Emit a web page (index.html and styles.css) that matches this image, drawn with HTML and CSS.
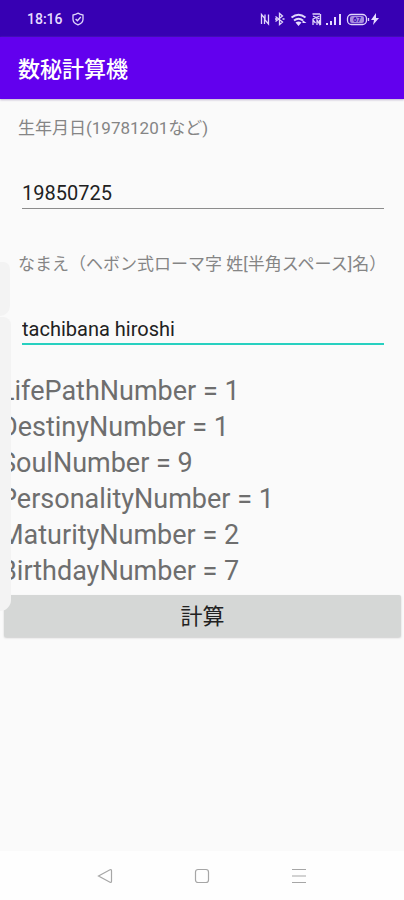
FILE: index.html
```html
<!DOCTYPE html>
<html lang="ja">
<head>
<meta charset="utf-8">
<meta name="viewport" content="width=device-width, initial-scale=1">
<title>数秘計算機</title>
<link rel="stylesheet" href="styles.css">
</head>
<body>
<div class="status">
  <span class="clock">18:16</span>
  <svg class="shield" width="14" height="14" viewBox="0 0 14 14"><path d="M7 1.200 9 2.200l3 .8v4.200c0 2.800-2.200 4.600-5 5.600-2.800-1-5-2.800-5-5.600V3l3-.8z"/><path d="m4.600 7 1.800 1.800L9.800 5"/></svg>
  <svg class="indicators" width="120" height="16" viewBox="0 0 120 16">
    <path d="M1.500 13V3.500L4.500 7v6M5 3.500V9l3.500 4V3.500"/>
    <path d="m15.500 5.500 7 5.500-3 2.500v-11l3 2.500-7 5.500M15 8h2M22.500 8h2"/>
    <path class="wide" d="M31.500 6.500q7-5.500 14 0M34 9.500q4.500-3.500 9 0"/>
    <path class="solid" d="m35.500 11.500q3-2 6 0l-3 3.500zM42.500 9l4 3h-4z"/>
    <path d="M52.500 3h7.500M53 5l6.500 3M59.500 5 53 8M53 14V9l2.500 3M57 14V9l2.500 4V9M60.500 3v11"/>
    <path class="solid" d="M66 12h2v2h-2zM70 10h2v4h-2zM74 6h2v8h-2zM79 3h2v11h-2z"/>
    <rect x="87.500" y="3.500" width="19" height="10" rx="4"/>
    <path d="M108.500 7v3"/>
    <rect class="charge" x="90" y="5" width="14" height="7" rx="2"/>
    <text x="97" y="11">67</text>
    <path class="solid" d="m116 2-5 7h3l-1 5 6-7h-3z"/>
  </svg>
</div>
<header class="appbar"><h1>数秘計算機</h1></header>
<main>
  <form class="form">
    <div class="field">
      <label for="birth">生年月日(19781201など)</label>
      <input id="birth" type="text" inputmode="numeric" value="19850725">
    </div>
    <div class="field">
      <label for="name">なまえ（ヘボン式ローマ字 姓[半角スペース]名）</label>
      <input id="name" class="active" type="text" value="tachibana hiroshi">
    </div>
    <output class="results" for="birth name">
      <span>LifePathNumber = 1</span>
      <span>DestinyNumber = 1</span>
      <span>SoulNumber = 9</span>
      <span>PersonalityNumber = 1</span>
      <span>MaturityNumber = 2</span>
      <span>BirthdayNumber = 7</span>
    </output>
    <button class="calc" type="button">計算</button>
  </form>
</main>
<div class="edge-tab"></div>
<div class="edge-panel"></div>
<nav class="navbar">
  <button type="button" aria-label="戻る"><svg width="16" height="16" viewBox="0 0 16 16"><path d="M1.500 8 13 1.800q1.500-.5 1.500 1v10.400q0 1.500-1.500 1z"/></svg></button>
  <button type="button" aria-label="ホーム"><svg width="16" height="16" viewBox="0 0 16 16"><rect x="1.500" y="1.500" width="13" height="13" rx="2.500"/></svg></button>
  <button type="button" aria-label="メニュー"><svg width="16" height="16" viewBox="0 0 16 16"><path d="M1 1.500h14M1 8h14M1 14.500h14"/></svg></button>
</nav>
</body>
</html>
```
FILE: styles.css
```css
* {
  box-sizing: border-box;
}

body {
  margin: 0;
  min-height: 100vh;
  display: flex;
  flex-direction: column;
  position: relative;
  background: #fafafa;
  font-family: Roboto, "Noto Sans CJK JP", sans-serif;
}

.status {
  display: flex;
  align-items: center;
  height: 37px;
  padding: 0 24px 0 27px;
  background: #3700b3;
  color: #e6dcff;
}

.clock {
  font-size: 14px;
  font-weight: 500;
}

.shield {
  margin-left: 8px;
}

.indicators {
  margin-left: auto;
}

.status svg {
  fill: none;
  stroke: #e0d6fb;
  stroke-width: 1.3;
}

.status .wide {
  stroke-width: 2;
}

.status .solid {
  fill: #e6dcff;
  stroke: none;
}

.status .charge {
  fill: #a78be0;
  stroke: none;
}

.status text {
  fill: #3700b3;
  stroke: none;
  font-size: 7px;
  font-weight: 700;
  text-anchor: middle;
}

.appbar {
  display: flex;
  align-items: center;
  height: 62px;
  padding: 0 18px 2px;
  background: #6200ee;
  box-shadow: 0 1px 2px #bdb5cc;
}

.appbar h1 {
  margin: 0;
  color: #fff;
  font-size: 22px;
  font-weight: 500;
}

main {
  flex: 1;
}

.form {
  display: flex;
  flex-direction: column;
  padding-top: 16px;
}

.field {
  display: flex;
  flex-direction: column;
  padding: 0 20px 0 18px;
}

.field + .field {
  margin-top: 42px;
}

.field label {
  color: #858585;
  font-size: 17px;
  line-height: 26px;
  white-space: nowrap;
}

.field input {
  height: 30px;
  margin: 38px 0 0 4px;
  padding: 0 0 1px;
  border: 0;
  border-bottom: 1px solid #8c8c8c;
  border-radius: 0;
  outline: 0;
  background: transparent;
  color: #212121;
  font: 20px Roboto, "Noto Sans CJK JP", sans-serif;
}

.field input.active {
  padding: 0;
  border-bottom: 2px solid #27d0c0;
}

.results {
  display: flex;
  flex-direction: column;
  padding-top: 28px;
  color: #6e6e6e;
  font-size: 27px;
  line-height: 36px;
}

.calc {
  height: 42px;
  margin: 6px 3px 0 4px;
  padding: 0 0 4px;
  border: 0;
  border-radius: 2px;
  background: #d5d7d6;
  box-shadow: 0 1px 2px #ccc;
  color: #212121;
  font: 22px Roboto, "Noto Sans CJK JP", sans-serif;
}

.edge-tab,
.edge-panel {
  position: absolute;
  left: 0;
  background: #f3f3f3;
}

.edge-tab {
  top: 262px;
  width: 10px;
  height: 54px;
  border-radius: 0 8px 12px 0;
}

.edge-panel {
  top: 317px;
  width: 11px;
  height: 294px;
  border-radius: 0 10px 14px 0;
}

.navbar {
  display: flex;
  justify-content: center;
  gap: 73px;
  height: 49px;
  background: #fefefe;
}

.navbar button {
  display: grid;
  place-items: center;
  width: 24px;
  padding: 0;
  border: 0;
  background: transparent;
}

.navbar svg {
  fill: none;
  stroke: #a6a6a6;
  stroke-width: 1.2;
}
```
